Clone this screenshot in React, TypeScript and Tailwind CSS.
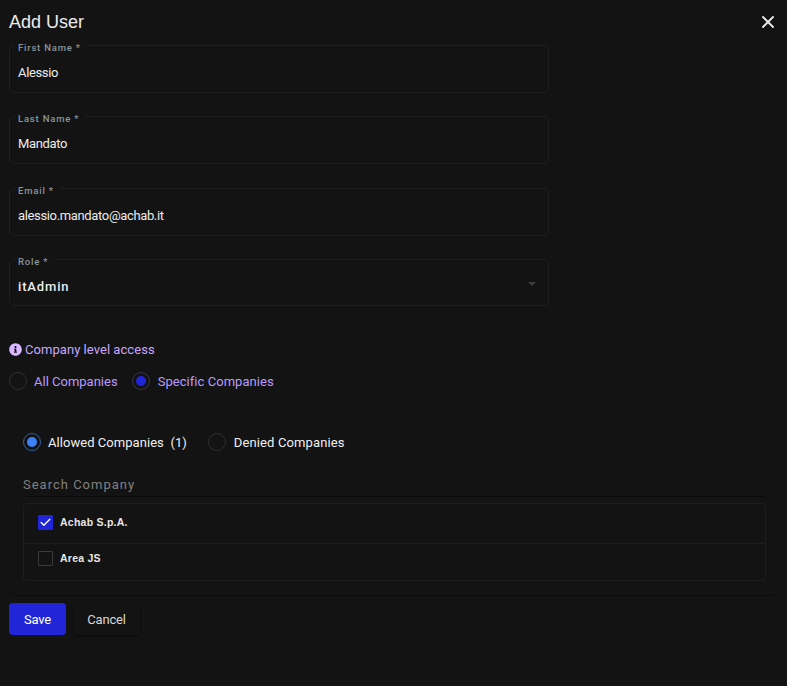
import { X, Check } from "lucide-react";
import { FaInfoCircle } from "react-icons/fa";

function Field({ label, value, box, bold }: { label: string; value: string; box: string; bold?: boolean }) {
  return (
    <fieldset className={`w-[540px] rounded-[5px] border border-[#1f1f1f] px-[5px] relative ${box}`}>
      <legend className="pl-[3px] pr-[6px] pt-[5px] text-[9.5px] leading-[10px] tracking-[0.8px] text-[#87959a] font-medium">{label}</legend>
      <div className={`pl-[3px] pt-[10px] leading-[20px] text-[#ececec] ${bold ? "text-[13px] font-medium tracking-[0.85px]" : "text-[13px] tracking-[-0.35px]"}`}>{value}</div>
      {bold && (
        <div className="absolute right-[12px] top-[15px] w-0 h-0 border-l-[4px] border-r-[4px] border-t-[4px] border-l-transparent border-r-transparent border-t-[#3d3d3d]" />
      )}
    </fieldset>
  );
}

function Radio({ on, color, ring }: { on?: boolean; color?: string; ring?: string }) {
  return (
    <span className={`flex items-center justify-center w-[18px] h-[18px] rounded-full border ${ring ?? "border-[#2e2e2e]"}`}>
      {on && <span className={`w-[10px] h-[10px] rounded-full ${color}`} />}
    </span>
  );
}

export default function App() {
  return (
    <div className="w-[787px] h-[686px] bg-[#131313] px-[9px] overflow-hidden font-['Roboto',sans-serif] text-[#e8e8e8]">
      <div className="flex items-center justify-between h-[45px] pb-[1px]">
        <h1 className="text-[18px] leading-[24px] font-['Liberation_Sans',sans-serif] text-[#ececec]">Add User</h1>
        <X className="w-[20px] h-[20px] text-[#ececec]" strokeWidth={2.2} />
      </div>
      <div className="-mt-[7px]">
        <Field label="First Name *" value="Alessio" box="h-[55px]" />
        <Field label="Last Name *" value="Mandato" box="h-[55px] mt-[16px]" />
        <Field label="Email *" value="alessio.mandato@achab.it" box="h-[55px] mt-[17px]" />
        <Field label="Role *" value="itAdmin" box="h-[54px] mt-[16px]" bold />
      </div>
      <div className="mt-[34px] flex items-center gap-[3px] text-[13px] leading-[16px] text-[#c9a6ff] h-[18px]">
        <FaInfoCircle className="w-[13px] h-[13px] text-[#d9b8ff]" />
        <span className="pt-[2px] tracking-[0.05px]">Company level access</span>
      </div>
      <div className="mt-[14px] flex items-center text-[13px] leading-[16px] text-[#b79bff] h-[18px]">
        <Radio />
        <span className="ml-[7px] pt-[2px]">All Companies</span>
        <span className="ml-[14px]"><Radio on color="bg-[#2026d8]" ring="border-[#3a3348]" /></span>
        <span className="ml-[8px] pt-[2px] tracking-[0.05px]">Specific Companies</span>
      </div>
      <div className="mt-[8px] h-[198px] w-[769px] rounded-b-[6px] border-b border-[#0c0c0c] pl-[14px] pr-[12px] pt-[35px]">
        <div className="flex items-center text-[13px] leading-[16px] text-[#f0f0f0] h-[18px]">
          <Radio on color="bg-[#3b82f6]" ring="border-[#2f5f9e]" />
          <span className="ml-[7px] pt-[2px] whitespace-pre tracking-[0.05px]">Allowed Companies  (1)</span>
          <span className="ml-[21px]"><Radio /></span>
          <span className="ml-[8px] pt-[2px] tracking-[0.12px]">Denied Companies</span>
        </div>
        <div className="mt-[24px] h-[22px] border-b border-[#0c0c0c] pt-[1px] text-[13px] leading-[18px] tracking-[1px] text-[#808080]">Search Company</div>
        <div className="mt-[6px] rounded-[4px] border border-[#1e1e1e] text-[10.5px] font-['Liberation_Sans',sans-serif] font-bold tracking-[0.25px] text-[#e8e8e8]">
          <div className="flex items-center h-[40px] border-b border-[#1e1e1e] px-[14px] pb-[2px] gap-[7px]">
            <span className="flex items-center justify-center w-[15px] h-[15px] rounded-[1px] bg-[#2026d8]">
              <Check className="w-[13px] h-[13px] text-white" strokeWidth={2.5} />
            </span>
            Achab S.p.A.
          </div>
          <div className="flex items-center h-[36px] px-[14px] pb-[7px] gap-[7px]">
            <span className="w-[15px] h-[15px] rounded-[1px] border border-[#3a3a3a]" />
            Area JS
          </div>
        </div>
      </div>
      <div className="mt-[7px] flex items-center gap-[7px] text-[13px]">
        <button className="w-[57px] h-[32px] pt-[1px] rounded-[4px] bg-[#2026d8] text-white tracking-[-0.2px]">Save</button>
        <button className="w-[67px] h-[32px] pt-[1px] rounded-[4px] bg-[#131313] text-[#d8d8d8] tracking-[-0.2px] shadow-[0_1px_3px_rgba(0,0,0,0.5)]">Cancel</button>
      </div>
    </div>
  );
}
